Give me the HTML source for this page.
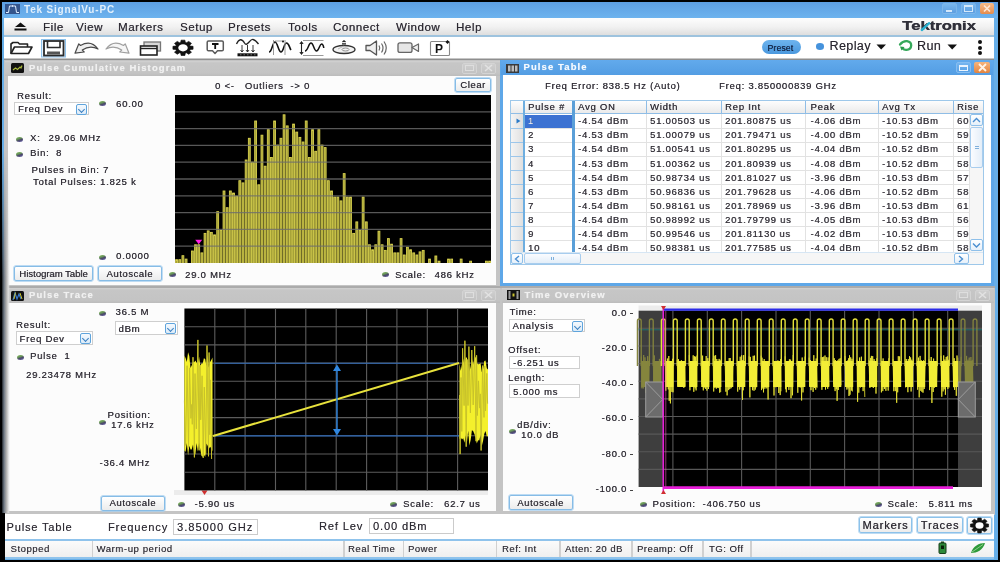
<!DOCTYPE html>
<html><head><meta charset="utf-8">
<style>
*{box-sizing:border-box;margin:0;padding:0}
html,body{width:1000px;height:562px;overflow:hidden;background:#000;font-family:"Liberation Sans",sans-serif;color:#333}
.a{position:absolute}
.t{position:absolute;white-space:nowrap;line-height:1}
.mi{position:absolute;top:22px;font-size:11.5px;letter-spacing:0.55px;color:#2a2730;text-shadow:0.35px 0 0 rgba(42,39,48,0.6);white-space:nowrap;line-height:1}
.l{position:absolute;font-size:9.5px;letter-spacing:0.75px;color:#2c2932;white-space:nowrap;line-height:1;margin-top:0.45px;text-shadow:0.35px 0 0 rgba(44,41,50,0.7)}
.btn{position:absolute;border:1px solid #86bce6;box-shadow:0 0 0 0.7px #a8d0f0;border-radius:2px;background:linear-gradient(#fff,#ececec);font-size:9.5px;letter-spacing:0.55px;color:#2c2932;text-align:center;white-space:nowrap;text-shadow:0.35px 0 0 rgba(44,41,50,0.7)}
.sel{position:absolute;border:1px solid #cfcfcf;background:#fff;font-size:9.5px;letter-spacing:0.75px;color:#2c2932;white-space:nowrap;text-shadow:0.35px 0 0 rgba(44,41,50,0.7)}
.sel i{position:absolute;right:1px;top:1px;width:11px;height:11px;border:1px solid #5fa4dc;border-radius:2px;background:linear-gradient(#f4f9fe,#dcebf8)}
.sel i:after{content:"";position:absolute;left:2px;top:2px;width:4px;height:4px;border-right:1.3px solid #3a7fc0;border-bottom:1.3px solid #3a7fc0;transform:rotate(45deg)}
.ph{position:absolute;height:15px;background:linear-gradient(#d2d2d2 0,#c6c6c6 2px,#c4c4c4 80%,#bcbcbc)}
.pt{position:absolute;font-size:9.5px;font-weight:bold;letter-spacing:1.1px;margin-top:-0.8px;color:#f0f0f0;text-shadow:0 0 1px rgba(255,255,255,0.6);white-space:nowrap;line-height:1}
.bul{position:absolute;width:7px;height:5px;border-radius:50%;background:linear-gradient(160deg,#8ab868 0%,#6a9a58 35%,#4a4868 60%,#7068b8 100%)}
</style></head><body><div id="root" style="position:absolute;left:0;top:0;width:1000px;height:562px;filter:blur(0.4px)">
<!-- window frame -->
<div class="a" style="left:2px;top:2px;width:996px;height:558px;background:#66aee8"></div>
<div class="a" style="left:2px;top:2px;width:996px;height:16px;background:linear-gradient(#5d9fe2,#6db3ee)"></div>
<div class="a" style="left:4px;top:18px;width:990px;height:539px;background:#fff"></div>
<!-- title -->
<svg class="a" style="left:5px;top:4px" width="15" height="10" viewBox="0 0 15 10"><rect width="15" height="10" fill="#34558c"/><path d="M1 8.5 L3.5 8.5 L4.5 2 L10.5 2 L11.5 8.5 L14 8.5" stroke="#dfeeff" stroke-width="1" fill="none"/><path d="M7.5 1 V3" stroke="#dfeeff" stroke-width="0.8"/></svg>
<div class="t" style="left:24px;top:5px;font-size:10px;font-weight:bold;letter-spacing:0.8px;color:#e2f0fc">Tek SignalVu-PC</div>
<div class="a" style="left:942px;top:3px;width:15px;height:11px;border:1px solid #7cb6ea;border-radius:2px;background:linear-gradient(#78b6ee,#5d9fe0)"></div>
<div class="a" style="left:946px;top:9.5px;width:6px;height:2px;background:#d4e8fa"></div>
<div class="a" style="left:961px;top:3px;width:15px;height:11px;border:1px solid #7cb6ea;border-radius:2px;background:linear-gradient(#78b6ee,#5d9fe0)"></div>
<div class="a" style="left:964px;top:5px;width:9px;height:7px;border:1.2px solid #d4e8fa;border-top-width:2px"></div>
<div class="a" style="left:980px;top:3px;width:14px;height:11px;border-radius:2px;background:linear-gradient(#f6bb88,#e68c4c)"></div>
<svg class="a" style="left:982px;top:4px" width="10" height="9"><path d="M2 1.5 L8 7.5 M8 1.5 L2 7.5" stroke="#fde6d4" stroke-width="1.7"/></svg>

<!-- menu -->
<div class="a" style="left:4px;top:18px;width:990px;height:18px;background:linear-gradient(#fdfdfd,#f1f1f1 50%,#dcdcdc)"></div>
<div class="a" style="left:4px;top:35.2px;width:990px;height:1.6px;background:#9ec3de"></div>
<svg class="a" style="left:13px;top:22px" width="15" height="9"><path d="M7.5 0.5 L13 5 L2 5 Z" fill="#111"/><rect x="1.5" y="6.5" width="12" height="2" fill="#111"/></svg>
<div class="mi" style="left:43px">File</div>
<div class="mi" style="left:76px">View</div>
<div class="mi" style="left:118px">Markers</div>
<div class="mi" style="left:180px">Setup</div>
<div class="mi" style="left:228px">Presets</div>
<div class="mi" style="left:288px">Tools</div>
<div class="mi" style="left:333px">Connect</div>
<div class="mi" style="left:396px">Window</div>
<div class="mi" style="left:456px">Help</div>
<!-- tektronix logo -->
<div class="t" style="left:901.5px;top:19px;font-size:13px;font-weight:bold;letter-spacing:0px;color:#30303a;text-shadow:0.4px 0 0 #30303a;transform:scaleX(1.28);transform-origin:0 0">Tektronix</div><svg class="a" style="left:915px;top:20px" width="20" height="14"><path d="M6.8 10 L14.2 3.2" stroke="#2ab0d0" stroke-width="2.4" stroke-linecap="round"/></svg>

<!-- toolbar -->
<div class="a" style="left:4px;top:57.8px;width:990px;height:1.2px;background:#c6c6c6"></div><div class="a" style="left:4px;top:59px;width:990px;height:1.8px;background:#8e8e8e"></div>
<svg class="a" style="left:0;top:0" width="1000" height="60" viewBox="0 0 1000 60">
 <!-- open folder -->
 <path d="M11 53.5 L11 44 L13 42.5 L18 42.5 L19.5 44 L27.5 44 L27.5 47" fill="none" stroke="#222" stroke-width="1.6" stroke-linejoin="round"/>
 <path d="M11 53.5 L14.5 47 L32 47 L28.5 53.5 Z" fill="#fff" stroke="#222" stroke-width="1.6" stroke-linejoin="round"/>
 <!-- save highlight -->
 <rect x="41.5" y="39.5" width="24" height="17.5" fill="#e4f0fb" stroke="#8cc0ea" stroke-width="1"/>
 <rect x="44" y="41" width="19.5" height="14.5" fill="#fff" stroke="#2a2a2a" stroke-width="1.8"/>
 <path d="M47.5 41 V47.5 H60 V41" fill="none" stroke="#2a2a2a" stroke-width="1.6"/>
 <rect x="47" y="51.5" width="13" height="3" fill="#555"/>
 <!-- undo -->
 <path d="M98 49 Q91 39.5 80.5 45.5 L78.8 43.8 L75 53.2 L84.2 52 L82.3 50 Q90 45 98 49 Z" fill="#efefef" stroke="#4a4a4a" stroke-width="1.2" stroke-linejoin="round"/>
 <!-- redo -->
 <path d="M106 49 Q113 39.5 123.5 45.5 L125.2 43.8 L129 53.2 L119.8 52 L121.7 50 Q114 45 106 49 Z" fill="#f6f6f6" stroke="#a0a0a0" stroke-width="1.2" stroke-linejoin="round"/>
 <!-- windows -->
 <rect x="144" y="42" width="16.5" height="9" fill="#d8d8d8" stroke="#777" stroke-width="1.3"/>
 <rect x="140.5" y="46" width="16.5" height="9" fill="#fff" stroke="#222" stroke-width="1.6"/>
 <path d="M140.5 48.5 H157" stroke="#222" stroke-width="1.4"/>
 <!-- gear -->
 <g transform="translate(183,47.8) scale(1.28,0.97)"><path fill="#111" stroke="#111" stroke-width="0.6" stroke-linejoin="round" d="M5.64 -1.74 L7.86 -1.51 L7.86 1.51 L5.64 1.74 L5.22 2.75 L6.62 4.49 L4.49 6.62 L2.75 5.22 L1.74 5.64 L1.51 7.86 L-1.51 7.86 L-1.74 5.64 L-2.75 5.22 L-4.49 6.62 L-6.62 4.49 L-5.22 2.75 L-5.64 1.74 L-7.86 1.51 L-7.86 -1.51 L-5.64 -1.74 L-5.22 -2.75 L-6.62 -4.49 L-4.49 -6.62 L-2.75 -5.22 L-1.74 -5.64 L-1.51 -7.86 L1.51 -7.86 L1.74 -5.64 L2.75 -5.22 L4.49 -6.62 L6.62 -4.49 L5.22 -2.75 Z"/><circle r="3.7" fill="#fff"/></g>
 <!-- T bubble -->
 <path d="M208.5 41 H222 Q223.3 41 223.3 42.3 V49.5 Q223.3 50.8 222 50.8 H217.5 L215 53.5 L212.5 50.8 H208.5 Q207.2 50.8 207.2 49.5 V42.3 Q207.2 41 208.5 41 Z" fill="#fff" stroke="#5a5a5a" stroke-width="1.5" stroke-linejoin="round"/>
 <path d="M212 44 H218.5 M215.2 44 V49" stroke="#111" stroke-width="1.8"/>
 <!-- spectrum w/ arrows -->
 <path d="M236.5 44 C239 38.5 242 38.5 244.5 43 C247 47.5 250 38.5 253 39.5 C255.5 40 257 42 258.5 44" fill="none" stroke="#222" stroke-width="1.3"/>
 <path d="M242 45 V52 M247.5 45 V52 M253 45 V52" stroke="#222" stroke-width="0.9"/>
 <path d="M240.5 50 L242 52 L243.5 50 M246 50 L247.5 52 L249 50 M251.5 50 L253 52 L254.5 50" fill="none" stroke="#222" stroke-width="0.9"/>
 <rect x="237.5" y="53.3" width="20" height="3" fill="#111"/>
 <path d="M240 54.8 H256" stroke="#888" stroke-width="0.8" stroke-dasharray="1.5 2"/>
 <!-- waveform markers -->
 <path d="M269 52 C272 52 272.5 42 275 42 C277.5 42 278.5 52 281 52 C283.5 52 284 43 286.5 43 C289 43 289.5 48 291 50" fill="none" stroke="#111" stroke-width="1.6"/>
 <path d="M273.5 40 V55 M285 40 V55" stroke="#999" stroke-width="1"/>
 <path d="M275 41 H284" stroke="#888" stroke-width="0.8"/>
 <circle cx="283" cy="41.5" r="1" fill="#111"/>
 <!-- waveform with ruler -->
 <path d="M303 40.5 H323.5 M303 55.5 H323.5" stroke="#999" stroke-width="1.2"/>
 <path d="M301.5 42 V54" stroke="#222" stroke-width="1.1"/>
 <path d="M299.8 44 L301.5 41.5 L303.2 44 M299.8 52 L301.5 54.5 L303.2 52" fill="#222" stroke="#222" stroke-width="0.8"/>
 <path d="M305 51 C308 51 308.5 43 311 43 C313.5 43 314 51 316.5 51 C319 51 319.5 44 321.5 44 C322.8 44 323.5 46 323.8 48" fill="none" stroke="#111" stroke-width="1.5"/>
 <!-- disc -->
 <ellipse cx="344" cy="49.5" rx="11" ry="4" fill="#f2f2f2" stroke="#333" stroke-width="1.3"/>
 <ellipse cx="345.5" cy="49.5" rx="3.5" ry="1.5" fill="none" stroke="#777" stroke-width="0.8"/>
 <path d="M338 49 L344 46" stroke="#aaa" stroke-width="0.8"/>
 <path d="M342 43.8 H346 M342.5 42 L344 40.8 L345.5 42" stroke="#222" stroke-width="1.2" fill="#222"/>
 <!-- speaker -->
 <path d="M366 45.5 H370 L376.5 41 V55 L370 50.5 H366 Z" fill="#f0f0f0" stroke="#555" stroke-width="1.3" stroke-linejoin="round"/>
 <path d="M379 45.5 Q380.5 48 379 50.5 M381.5 43.5 Q384.5 48 381.5 52.5 M384 41.5 Q388.5 48 384 54.5" fill="none" stroke="#666" stroke-width="1.2"/>
 <!-- camera -->
 <rect x="398" y="42.8" width="14" height="9.6" rx="2" fill="#e6e6e6" stroke="#666" stroke-width="1.3"/>
 <path d="M412 47.5 L418.5 44 V51.5 Z" fill="#f2f2f2" stroke="#666" stroke-width="1.2" stroke-linejoin="round"/>
 <!-- P box -->
 <rect x="430.5" y="41.5" width="19" height="14" rx="1" fill="#fff" stroke="#888" stroke-width="1.1"/>
 <text x="435" y="53" font-family="Liberation Sans" font-weight="bold" font-size="12" fill="#111">P</text>
 <path d="M447.5 40 L449.5 42 L447.5 44 L445.5 42 Z" fill="#111"/>
</svg>

<!-- ===== PANEL 1: histogram ===== -->
<div class="a" style="left:4px;top:60px;width:497px;height:229px;background:#c4c4c4"></div>
<div class="ph" style="left:5px;top:60.8px;width:495px"></div>
<div class="a" style="left:8px;top:76px;width:488px;height:208.5px;background:#fcfcfc"></div>
<svg class="a" style="left:11px;top:63px" width="13" height="10"><rect width="13" height="10" rx="1.5" fill="#111"/><path d="M2 7 L4.5 5 L6.5 6.5 L9 4 L10 5 L11 2.5" stroke="#a9b83a" stroke-width="1.2" fill="none"/></svg>
<div class="pt" style="left:29px;top:64px">Pulse Cumulative Histogram</div>
<div class="a" style="left:462px;top:62.5px;width:15px;height:11px;border:1px solid #d4d4d4;border-radius:2px;background:linear-gradient(#cfcfcf,#c2c2c2)"></div>
<div class="a" style="left:465px;top:65px;width:9px;height:6px;border:1px solid #dedede"></div>
<div class="a" style="left:481px;top:62.5px;width:15px;height:11px;border:1px solid #d4d4d4;border-radius:2px;background:linear-gradient(#cfcfcf,#c2c2c2)"></div>
<svg class="a" style="left:483px;top:64px" width="11" height="8"><path d="M2 1 L9 7 M9 1 L2 7" stroke="#e2e2e2" stroke-width="1.6"/></svg>

<div class="l" style="left:17px;top:91px">Result:</div>
<div class="sel" style="left:14px;top:102px;width:75px;height:13px"><span style="position:absolute;left:3px;top:0.3px;line-height:11px">Freq Dev</span><i></i></div>
<div class="bul" style="left:99px;top:101px"></div>
<div class="l" style="left:116px;top:99px">60.00</div>
<div class="bul" style="left:16px;top:137px"></div>
<div class="l" style="left:30px;top:133px">X:</div>
<div class="l" style="left:48.5px;top:133px">29.06 MHz</div>
<div class="bul" style="left:16px;top:152px"></div>
<div class="l" style="left:30px;top:147.5px">Bin:</div>
<div class="l" style="left:56px;top:147.5px">8</div>
<div class="l" style="left:31.5px;top:164.5px">Pulses in Bin: 7</div>
<div class="l" style="left:33px;top:177px">Total Pulses: 1.825 k</div>
<div class="bul" style="left:99px;top:255px"></div>
<div class="l" style="left:116px;top:251px">0.0000</div>
<div class="btn" style="left:14px;top:266px;width:79px;height:15px;line-height:13px;letter-spacing:0px">Histogram Table</div>
<div class="btn" style="left:97.5px;top:266px;width:64.5px;height:15px;line-height:13px">Autoscale</div>
<div class="bul" style="left:169px;top:272px"></div>
<div class="l" style="left:185px;top:270px">29.0 MHz</div>
<div class="l" style="left:215px;top:81px">0 &lt;-&nbsp;&nbsp; Outliers&nbsp; -&gt; 0</div>
<div class="btn" style="left:455px;top:78px;width:36px;height:14px;line-height:12px">Clear</div>
<div class="bul" style="left:382px;top:272px"></div>
<div class="l" style="left:395px;top:270px">Scale:</div>
<div class="l" style="left:434.5px;top:270px">486 kHz</div>
<svg class="a" style="left:175px;top:94.5px" width="316.2" height="168.0" viewBox="175 94.5 316.2 168.0">
<rect x="175" y="94.5" width="316.2" height="168.0" fill="#000"/>
<g fill="#a19d36" stroke="#d9d24e" stroke-width="0.9"><rect x="175.65" y="259.2" width="1.86" height="5.3"/><rect x="178.81" y="259.2" width="1.86" height="5.3"/><rect x="181.97" y="255.2" width="1.86" height="9.3"/><rect x="185.14" y="258.6" width="1.86" height="5.9"/><rect x="191.46" y="250.5" width="1.86" height="14.0"/><rect x="194.62" y="244.3" width="1.86" height="20.2"/><rect x="197.78" y="244.3" width="1.86" height="20.2"/><rect x="200.95" y="252.4" width="1.86" height="12.1"/><rect x="204.11" y="232.9" width="1.86" height="31.6"/><rect x="207.27" y="230.4" width="1.86" height="34.1"/><rect x="210.43" y="231.9" width="1.86" height="32.6"/><rect x="213.59" y="234.4" width="1.86" height="30.1"/><rect x="216.76" y="211.2" width="1.86" height="53.3"/><rect x="219.92" y="229.8" width="1.86" height="34.7"/><rect x="223.08" y="190.5" width="1.86" height="74.0"/><rect x="226.24" y="207.2" width="1.86" height="57.3"/><rect x="229.40" y="190.5" width="1.86" height="74.0"/><rect x="232.57" y="192.6" width="1.86" height="71.9"/><rect x="235.73" y="195.7" width="1.86" height="68.8"/><rect x="238.89" y="180.2" width="1.86" height="84.3"/><rect x="242.05" y="182.4" width="1.86" height="82.1"/><rect x="245.21" y="159.5" width="1.86" height="105.0"/><rect x="248.38" y="137.8" width="1.86" height="126.7"/><rect x="251.54" y="161.7" width="1.86" height="102.8"/><rect x="254.70" y="120.5" width="1.86" height="144.0"/><rect x="257.86" y="184.3" width="1.86" height="80.2"/><rect x="261.02" y="134.7" width="1.86" height="129.8"/><rect x="264.19" y="165.7" width="1.86" height="98.8"/><rect x="267.35" y="129.2" width="1.86" height="135.3"/><rect x="270.51" y="157.0" width="1.86" height="107.5"/><rect x="273.67" y="120.5" width="1.86" height="144.0"/><rect x="276.83" y="144.6" width="1.86" height="119.9"/><rect x="280.00" y="137.8" width="1.86" height="126.7"/><rect x="283.16" y="114.3" width="1.86" height="150.2"/><rect x="286.32" y="125.4" width="1.86" height="139.1"/><rect x="289.48" y="157.0" width="1.86" height="107.5"/><rect x="292.64" y="123.6" width="1.86" height="140.9"/><rect x="295.81" y="131.6" width="1.86" height="132.9"/><rect x="298.97" y="136.9" width="1.86" height="127.6"/><rect x="302.13" y="141.5" width="1.86" height="123.0"/><rect x="305.29" y="120.5" width="1.86" height="144.0"/><rect x="308.45" y="157.0" width="1.86" height="107.5"/><rect x="311.62" y="129.2" width="1.86" height="135.3"/><rect x="314.78" y="150.8" width="1.86" height="113.7"/><rect x="317.94" y="129.2" width="1.86" height="135.3"/><rect x="321.10" y="144.6" width="1.86" height="119.9"/><rect x="324.26" y="147.1" width="1.86" height="117.4"/><rect x="327.43" y="180.2" width="1.86" height="84.3"/><rect x="330.59" y="190.5" width="1.86" height="74.0"/><rect x="333.75" y="196.6" width="1.86" height="67.9"/><rect x="336.91" y="196.6" width="1.86" height="67.9"/><rect x="340.07" y="200.4" width="1.86" height="64.1"/><rect x="343.24" y="173.1" width="1.86" height="91.4"/><rect x="346.40" y="196.6" width="1.86" height="67.9"/><rect x="349.56" y="196.6" width="1.86" height="67.9"/><rect x="352.72" y="232.9" width="1.86" height="31.6"/><rect x="355.88" y="221.4" width="1.86" height="43.1"/><rect x="359.05" y="229.8" width="1.86" height="34.7"/><rect x="362.21" y="196.6" width="1.86" height="67.9"/><rect x="365.37" y="221.4" width="1.86" height="43.1"/><rect x="368.53" y="244.3" width="1.86" height="20.2"/><rect x="371.69" y="249.3" width="1.86" height="15.2"/><rect x="374.86" y="244.3" width="1.86" height="20.2"/><rect x="378.02" y="230.7" width="1.86" height="33.8"/><rect x="381.18" y="244.3" width="1.86" height="20.2"/><rect x="384.34" y="249.9" width="1.86" height="14.6"/><rect x="387.50" y="238.1" width="1.86" height="26.4"/><rect x="390.67" y="243.7" width="1.86" height="20.8"/><rect x="393.83" y="252.4" width="1.86" height="12.1"/><rect x="396.99" y="252.4" width="1.86" height="12.1"/><rect x="400.15" y="238.1" width="1.86" height="26.4"/><rect x="403.31" y="254.5" width="1.86" height="10.0"/><rect x="406.48" y="246.8" width="1.86" height="17.7"/><rect x="409.64" y="249.3" width="1.86" height="15.2"/><rect x="412.80" y="252.4" width="1.86" height="12.1"/><rect x="415.96" y="254.5" width="1.86" height="10.0"/><rect x="419.12" y="251.4" width="1.86" height="13.1"/><rect x="422.29" y="249.9" width="1.86" height="14.6"/><rect x="428.61" y="258.6" width="1.86" height="5.9"/><rect x="434.93" y="255.5" width="1.86" height="9.0"/><rect x="438.10" y="260.7" width="1.86" height="3.8"/><rect x="447.58" y="258.6" width="1.86" height="5.9"/><rect x="450.74" y="258.6" width="1.86" height="5.9"/><rect x="460.23" y="258.6" width="1.86" height="5.9"/><rect x="469.72" y="260.7" width="1.86" height="3.8"/><rect x="485.53" y="260.7" width="1.86" height="3.8"/><rect x="488.69" y="260.7" width="1.86" height="3.8"/></g>
<g stroke="#6e6e6e" stroke-width="1.3" opacity="0.8"><path d="M175 111.3 H491.2"/><path d="M175 128.1 H491.2"/><path d="M175 144.9 H491.2"/><path d="M175 161.7 H491.2"/><path d="M175 178.5 H491.2"/><path d="M175 195.3 H491.2"/><path d="M175 212.1 H491.2"/><path d="M175 228.9 H491.2"/><path d="M175 245.7 H491.2"/></g>
<path d="M195.2 239.3 H202.2 L198.7 243.8 Z" fill="#ff20e0"/>
</svg>

<!-- ===== PANEL 2: table ===== -->
<div class="a" style="left:500px;top:59.5px;width:494px;height:226px;background:#5ea7e8"></div>
<div class="a" style="left:501px;top:60px;width:492px;height:15px;background:linear-gradient(#62aaec,#539de3)"></div>
<div class="a" style="left:503px;top:75px;width:488px;height:207.5px;background:#fff"></div>
<svg class="a" style="left:506px;top:63.5px" width="13" height="9"><rect width="13" height="9" fill="#3a3a3a"/><rect x="2" y="1.5" width="2.5" height="6" fill="#bdbdbd"/><rect x="5.5" y="1.5" width="2.5" height="6" fill="#bdbdbd"/><rect x="9" y="1.5" width="2.5" height="6" fill="#bdbdbd"/></svg>
<div class="pt" style="left:523.5px;top:63px;color:#f6faff">Pulse Table</div>
<div class="a" style="left:955.5px;top:62px;width:15.5px;height:11px;border:1px solid #86bdf0;border-radius:2px;background:linear-gradient(#74b5f0,#5aa2e6)"></div>
<div class="a" style="left:959px;top:65px;width:9px;height:6px;border:1.3px solid #eaf4fe;border-top-width:2px"></div>
<div class="a" style="left:974px;top:62px;width:15.5px;height:11px;border-radius:2px;background:linear-gradient(#f6b47c,#e3843f)"></div>
<svg class="a" style="left:976.5px;top:63px" width="11" height="9"><path d="M2 1 L9 8 M9 1 L2 8" stroke="#fff3e6" stroke-width="1.8"/></svg>
<div class="l" style="left:545px;top:81px">Freq Error: 838.5 Hz (Auto)</div>
<div class="l" style="left:719px;top:81px">Freq: 3.850000839 GHz</div>
<div class="a" style="left:510px;top:100px;width:473.5px;height:165px;background:#fff;border:1px solid #9ec8ea"></div>
<div class="a" style="left:511px;top:101px;width:471.5px;height:12.5px;background:linear-gradient(#fdfdfd,#e9e9e9)"></div>
<div class="a" style="left:510.5px;top:113px;width:472px;height:1px;background:#8fbde6"></div>
<div class="a" style="left:511px;top:114px;width:12.5px;height:138px;background:linear-gradient(90deg,#f4f4f4,#dedede)"></div>
<div class="a" style="left:524.5px;top:127.55px;width:444.5px;height:1px;background:#e2e2e2"></div>
<div class="a" style="left:511px;top:127.55px;width:13px;height:1px;background:#9cc6ea"></div>
<div class="a" style="left:524.5px;top:141.60px;width:444.5px;height:1px;background:#e2e2e2"></div>
<div class="a" style="left:511px;top:141.60px;width:13px;height:1px;background:#9cc6ea"></div>
<div class="a" style="left:524.5px;top:155.65px;width:444.5px;height:1px;background:#e2e2e2"></div>
<div class="a" style="left:511px;top:155.65px;width:13px;height:1px;background:#9cc6ea"></div>
<div class="a" style="left:524.5px;top:169.70px;width:444.5px;height:1px;background:#e2e2e2"></div>
<div class="a" style="left:511px;top:169.70px;width:13px;height:1px;background:#9cc6ea"></div>
<div class="a" style="left:524.5px;top:183.75px;width:444.5px;height:1px;background:#e2e2e2"></div>
<div class="a" style="left:511px;top:183.75px;width:13px;height:1px;background:#9cc6ea"></div>
<div class="a" style="left:524.5px;top:197.80px;width:444.5px;height:1px;background:#e2e2e2"></div>
<div class="a" style="left:511px;top:197.80px;width:13px;height:1px;background:#9cc6ea"></div>
<div class="a" style="left:524.5px;top:211.85px;width:444.5px;height:1px;background:#e2e2e2"></div>
<div class="a" style="left:511px;top:211.85px;width:13px;height:1px;background:#9cc6ea"></div>
<div class="a" style="left:524.5px;top:225.90px;width:444.5px;height:1px;background:#e2e2e2"></div>
<div class="a" style="left:511px;top:225.90px;width:13px;height:1px;background:#9cc6ea"></div>
<div class="a" style="left:524.5px;top:239.95px;width:444.5px;height:1px;background:#e2e2e2"></div>
<div class="a" style="left:511px;top:239.95px;width:13px;height:1px;background:#9cc6ea"></div>
<div class="a" style="left:524.5px;top:254.00px;width:444.5px;height:1px;background:#e2e2e2"></div>
<div class="a" style="left:511px;top:254.00px;width:13px;height:1px;background:#9cc6ea"></div>
<div class="a" style="left:574.0px;top:114px;width:1px;height:138px;background:#e2e2e2"></div>
<div class="a" style="left:574.0px;top:101px;width:1.2px;height:12.5px;background:#8fbde6"></div>
<div class="a" style="left:645.5px;top:114px;width:1px;height:138px;background:#e2e2e2"></div>
<div class="a" style="left:645.5px;top:101px;width:1.2px;height:12.5px;background:#8fbde6"></div>
<div class="a" style="left:720.5px;top:114px;width:1px;height:138px;background:#e2e2e2"></div>
<div class="a" style="left:720.5px;top:101px;width:1.2px;height:12.5px;background:#8fbde6"></div>
<div class="a" style="left:805.0px;top:114px;width:1px;height:138px;background:#e2e2e2"></div>
<div class="a" style="left:805.0px;top:101px;width:1.2px;height:12.5px;background:#8fbde6"></div>
<div class="a" style="left:877.5px;top:114px;width:1px;height:138px;background:#e2e2e2"></div>
<div class="a" style="left:877.5px;top:101px;width:1.2px;height:12.5px;background:#8fbde6"></div>
<div class="a" style="left:953.0px;top:114px;width:1px;height:138px;background:#e2e2e2"></div>
<div class="a" style="left:953.0px;top:101px;width:1.2px;height:12.5px;background:#8fbde6"></div>
<div class="a" style="left:523px;top:101px;width:1.5px;height:151px;background:#6eaee0"></div>
<div class="a" style="left:572px;top:101px;width:2.5px;height:151px;background:#5a9fd8"></div>
<div class="a" style="left:524.5px;top:114.5px;width:47.5px;height:13px;background:#3c72d2"></div>
<svg class="a" style="left:515.5px;top:118px" width="5" height="6"><path d="M0.5 0.5 L4.5 3 L0.5 5.5 Z" fill="#2a7ac8"/></svg>
<div class="l" style="left:528px;top:101.5px">Pulse #</div>
<div class="l" style="left:578px;top:101.5px">Avg ON</div>
<div class="l" style="left:650px;top:101.5px">Width</div>
<div class="l" style="left:725px;top:101.5px">Rep Int</div>
<div class="l" style="left:810.5px;top:101.5px">Peak</div>
<div class="l" style="left:882px;top:101.5px">Avg Tx</div>
<div class="l" style="left:957px;top:101.5px">Rise</div>
<div class="l" style="left:528px;top:115.80px;color:#f4f8ff">1</div>
<div class="l" style="left:578px;top:115.80px;color:#333038">-4.54 dBm</div>
<div class="l" style="left:650px;top:115.80px;color:#333038">51.00503 us</div>
<div class="l" style="left:725px;top:115.80px;color:#333038">201.80875 us</div>
<div class="l" style="left:810.5px;top:115.80px;color:#333038">-4.06 dBm</div>
<div class="l" style="left:882px;top:115.80px;color:#333038">-10.53 dBm</div>
<div class="l" style="left:957px;top:115.80px;color:#333038">60</div>
<div class="l" style="left:528px;top:129.90px;color:#333038">2</div>
<div class="l" style="left:578px;top:129.90px;color:#333038">-4.53 dBm</div>
<div class="l" style="left:650px;top:129.90px;color:#333038">51.00079 us</div>
<div class="l" style="left:725px;top:129.90px;color:#333038">201.79471 us</div>
<div class="l" style="left:810.5px;top:129.90px;color:#333038">-4.00 dBm</div>
<div class="l" style="left:882px;top:129.90px;color:#333038">-10.52 dBm</div>
<div class="l" style="left:957px;top:129.90px;color:#333038">59</div>
<div class="l" style="left:528px;top:144.00px;color:#333038">3</div>
<div class="l" style="left:578px;top:144.00px;color:#333038">-4.54 dBm</div>
<div class="l" style="left:650px;top:144.00px;color:#333038">51.00541 us</div>
<div class="l" style="left:725px;top:144.00px;color:#333038">201.80295 us</div>
<div class="l" style="left:810.5px;top:144.00px;color:#333038">-4.04 dBm</div>
<div class="l" style="left:882px;top:144.00px;color:#333038">-10.52 dBm</div>
<div class="l" style="left:957px;top:144.00px;color:#333038">58</div>
<div class="l" style="left:528px;top:158.10px;color:#333038">4</div>
<div class="l" style="left:578px;top:158.10px;color:#333038">-4.53 dBm</div>
<div class="l" style="left:650px;top:158.10px;color:#333038">51.00362 us</div>
<div class="l" style="left:725px;top:158.10px;color:#333038">201.80939 us</div>
<div class="l" style="left:810.5px;top:158.10px;color:#333038">-4.08 dBm</div>
<div class="l" style="left:882px;top:158.10px;color:#333038">-10.52 dBm</div>
<div class="l" style="left:957px;top:158.10px;color:#333038">58</div>
<div class="l" style="left:528px;top:172.20px;color:#333038">5</div>
<div class="l" style="left:578px;top:172.20px;color:#333038">-4.54 dBm</div>
<div class="l" style="left:650px;top:172.20px;color:#333038">50.98734 us</div>
<div class="l" style="left:725px;top:172.20px;color:#333038">201.81027 us</div>
<div class="l" style="left:810.5px;top:172.20px;color:#333038">-3.96 dBm</div>
<div class="l" style="left:882px;top:172.20px;color:#333038">-10.53 dBm</div>
<div class="l" style="left:957px;top:172.20px;color:#333038">57</div>
<div class="l" style="left:528px;top:186.30px;color:#333038">6</div>
<div class="l" style="left:578px;top:186.30px;color:#333038">-4.53 dBm</div>
<div class="l" style="left:650px;top:186.30px;color:#333038">50.96836 us</div>
<div class="l" style="left:725px;top:186.30px;color:#333038">201.79628 us</div>
<div class="l" style="left:810.5px;top:186.30px;color:#333038">-4.06 dBm</div>
<div class="l" style="left:882px;top:186.30px;color:#333038">-10.52 dBm</div>
<div class="l" style="left:957px;top:186.30px;color:#333038">58</div>
<div class="l" style="left:528px;top:200.40px;color:#333038">7</div>
<div class="l" style="left:578px;top:200.40px;color:#333038">-4.54 dBm</div>
<div class="l" style="left:650px;top:200.40px;color:#333038">50.98161 us</div>
<div class="l" style="left:725px;top:200.40px;color:#333038">201.78969 us</div>
<div class="l" style="left:810.5px;top:200.40px;color:#333038">-3.96 dBm</div>
<div class="l" style="left:882px;top:200.40px;color:#333038">-10.53 dBm</div>
<div class="l" style="left:957px;top:200.40px;color:#333038">61</div>
<div class="l" style="left:528px;top:214.50px;color:#333038">8</div>
<div class="l" style="left:578px;top:214.50px;color:#333038">-4.54 dBm</div>
<div class="l" style="left:650px;top:214.50px;color:#333038">50.98992 us</div>
<div class="l" style="left:725px;top:214.50px;color:#333038">201.79799 us</div>
<div class="l" style="left:810.5px;top:214.50px;color:#333038">-4.05 dBm</div>
<div class="l" style="left:882px;top:214.50px;color:#333038">-10.53 dBm</div>
<div class="l" style="left:957px;top:214.50px;color:#333038">56</div>
<div class="l" style="left:528px;top:228.60px;color:#333038">9</div>
<div class="l" style="left:578px;top:228.60px;color:#333038">-4.54 dBm</div>
<div class="l" style="left:650px;top:228.60px;color:#333038">50.99546 us</div>
<div class="l" style="left:725px;top:228.60px;color:#333038">201.81130 us</div>
<div class="l" style="left:810.5px;top:228.60px;color:#333038">-4.02 dBm</div>
<div class="l" style="left:882px;top:228.60px;color:#333038">-10.53 dBm</div>
<div class="l" style="left:957px;top:228.60px;color:#333038">59</div>
<div class="l" style="left:528px;top:242.70px;color:#333038">10</div>
<div class="l" style="left:578px;top:242.70px;color:#333038">-4.54 dBm</div>
<div class="l" style="left:650px;top:242.70px;color:#333038">50.98381 us</div>
<div class="l" style="left:725px;top:242.70px;color:#333038">201.77585 us</div>
<div class="l" style="left:810.5px;top:242.70px;color:#333038">-4.04 dBm</div>
<div class="l" style="left:882px;top:242.70px;color:#333038">-10.52 dBm</div>
<div class="l" style="left:957px;top:242.70px;color:#333038">58</div>
<div class="a" style="left:969px;top:114px;width:14px;height:138px;background:#fff"></div>
<div class="a" style="left:969px;top:114px;width:14px;height:138px;background:#f6f6f6;border-left:1px solid #e2e2e2"></div>
<div class="a" style="left:970px;top:114px;width:13px;height:12px;border:1px solid #8fc0ea;border-radius:2px;background:linear-gradient(#fff,#e6f0fa)"></div>
<svg class="a" style="left:972px;top:117px" width="9" height="6"><path d="M1 5 L4.5 1.5 L8 5" stroke="#4a8ed0" stroke-width="1.4" fill="none"/></svg>
<div class="a" style="left:970px;top:127px;width:13px;height:41px;border:1px solid #a8cdee;border-radius:2px;background:linear-gradient(90deg,#fafcff,#e4eef8)"></div>
<div class="a" style="left:974.5px;top:146px;width:4px;height:1px;background:#7fb0dc"></div><div class="a" style="left:974.5px;top:148px;width:4px;height:1px;background:#7fb0dc"></div>
<div class="a" style="left:970px;top:239px;width:13px;height:12px;border:1px solid #8fc0ea;border-radius:2px;background:linear-gradient(#fff,#e6f0fa)"></div>
<svg class="a" style="left:972px;top:242px" width="9" height="6"><path d="M1 1.5 L4.5 5 L8 1.5" stroke="#4a8ed0" stroke-width="1.4" fill="none"/></svg>
<div class="a" style="left:511px;top:252px;width:471.5px;height:12px;background:#f6f6f6;border-top:1px solid #d6e6f4"></div>
<div class="a" style="left:511px;top:253px;width:12px;height:11px;border:1px solid #8fc0ea;border-radius:2px;background:linear-gradient(#fff,#e6f0fa)"></div>
<svg class="a" style="left:514px;top:255px" width="6" height="8"><path d="M5 1 L1.5 4 L5 7" stroke="#4a8ed0" stroke-width="1.4" fill="none"/></svg>
<div class="a" style="left:524px;top:253px;width:57px;height:11px;border:1px solid #a8cdee;border-radius:2px;background:linear-gradient(#fafcff,#e4eef8)"></div>
<div class="a" style="left:551px;top:257px;width:1px;height:3px;background:#7fb0dc"></div><div class="a" style="left:553px;top:257px;width:1px;height:3px;background:#7fb0dc"></div>
<div class="a" style="left:953.5px;top:253px;width:15px;height:11px;border:1px solid #8fc0ea;border-radius:2px;background:linear-gradient(#fff,#e6f0fa)"></div>
<svg class="a" style="left:958px;top:255px" width="6" height="8"><path d="M1 1 L4.5 4 L1 7" stroke="#4a8ed0" stroke-width="1.4" fill="none"/></svg>
<!-- ===== PANEL 3: pulse trace ===== -->
<div class="a" style="left:4px;top:287px;width:497px;height:227.5px;background:#c4c4c4"></div>
<div class="a" style="left:4px;top:285.5px;width:497px;height:2.5px;background:#ababab"></div>
<div class="ph" style="left:5px;top:288px;width:495px"></div>
<svg class="a" style="left:11px;top:291px" width="13" height="10"><rect width="13" height="10" rx="1.5" fill="#111"/><path d="M2 9 L4 2 L6 8 L8 3 L10 8" stroke="#3a7ad0" stroke-width="1.2" fill="none"/><path d="M3 8 L4.5 1.5 M9 2 L11 8" stroke="#c8c030" stroke-width="1"/></svg>
<div class="pt" style="left:29px;top:290.5px">Pulse Trace</div>
<div class="a" style="left:462px;top:289.5px;width:15px;height:11px;border:1px solid #d4d4d4;border-radius:2px;background:linear-gradient(#cfcfcf,#c2c2c2)"></div>
<div class="a" style="left:465px;top:292px;width:9px;height:6px;border:1px solid #dedede"></div>
<div class="a" style="left:481px;top:289.5px;width:15px;height:11px;border:1px solid #d4d4d4;border-radius:2px;background:linear-gradient(#cfcfcf,#c2c2c2)"></div>
<svg class="a" style="left:483px;top:291px" width="11" height="8"><path d="M2 1 L9 7 M9 1 L2 7" stroke="#e2e2e2" stroke-width="1.6"/></svg>
<div class="a" style="left:8px;top:303px;width:488px;height:208px;background:#fcfcfc"></div>
<div class="bul" style="left:99px;top:311px"></div>
<div class="l" style="left:115.5px;top:307px">36.5 M</div>
<div class="sel" style="left:114.5px;top:321px;width:63px;height:13.5px"><span style="position:absolute;left:3px;top:0.5px;line-height:11px">dBm</span><i></i></div>
<div class="l" style="left:16px;top:320px">Result:</div>
<div class="sel" style="left:15.5px;top:331px;width:77px;height:13.5px"><span style="position:absolute;left:3px;top:0.5px;line-height:11px">Freq Dev</span><i></i></div>
<div class="bul" style="left:17px;top:355px"></div>
<div class="l" style="left:30px;top:351px">Pulse&nbsp; 1</div>
<div class="l" style="left:26px;top:369.5px">29.23478 MHz</div>
<div class="bul" style="left:99px;top:420px"></div>
<div class="l" style="left:107.5px;top:409.5px">Position:</div>
<div class="l" style="left:111px;top:420px">17.6 kHz</div>
<div class="l" style="left:99.5px;top:458px">-36.4 MHz</div>
<div class="btn" style="left:100.5px;top:496px;width:64.5px;height:14.5px;line-height:12.5px">Autoscale</div>
<div class="bul" style="left:177.5px;top:502px"></div>
<div class="l" style="left:194.5px;top:498.5px">-5.90 us</div>
<div class="bul" style="left:390px;top:502px"></div>
<div class="l" style="left:403px;top:498.5px">Scale:</div>
<div class="l" style="left:444px;top:498.5px">62.7 us</div>
<div class="a" style="left:174px;top:490.4px;width:314px;height:5px;background:#ececec"></div>
<svg class="a" style="left:201px;top:490px" width="7" height="6"><path d="M0.5 0.5 H6.5 L3.5 5 Z" fill="#d03030"/></svg>
<svg class="a" style="left:0;top:0" width="1000" height="562" viewBox="0 0 1000 562"><rect x="184.4" y="308.5" width="303.6" height="181.9" fill="#000"/><path d="M214.8 308.5V490.4M184.4 326.7H488M245.1 308.5V490.4M184.4 344.9H488M275.5 308.5V490.4M184.4 363.1H488M305.8 308.5V490.4M184.4 381.3H488M336.2 308.5V490.4M184.4 399.4H488M366.6 308.5V490.4M184.4 417.6H488M396.9 308.5V490.4M184.4 435.8H488M427.3 308.5V490.4M184.4 454.0H488M457.6 308.5V490.4M184.4 472.2H488" stroke="#5c5c5c" stroke-width="1.1"/><polygon points="184.4,355.8 185.6,357.9 186.8,362.0 188.1,352.2 189.3,356.1 190.5,367.9 191.7,365.4 193.0,362.2 194.2,362.2 195.4,360.4 196.6,362.7 197.8,364.1 199.1,356.8 200.3,365.8 201.5,363.5 202.7,363.4 203.9,358.3 205.2,359.1 206.4,366.1 207.6,354.2 208.8,367.4 210.1,362.0 211.3,360.1 212.5,357.6 212.5,451.4 211.3,448.2 210.1,446.8 208.8,449.0 207.6,445.5 206.4,443.6 205.2,457.0 203.9,454.8 202.7,456.7 201.5,456.1 200.3,449.6 199.1,442.5 197.8,451.5 196.6,443.0 195.4,453.9 194.2,455.9 193.0,444.4 191.7,449.6 190.5,449.5 189.3,445.7 188.1,455.4 186.8,443.0 185.6,451.7 184.4,450.7" fill="#f4f02c"/><polyline points="184.4,400.5 185.6,445.3 187.1,365.7 188.5,447.5 189.6,367.9 190.9,418.4 191.6,404.5 192.3,424.3 193.0,357.2 194.4,457.4 195.0,373.6 196.4,428.8 197.9,339.9 199.1,450.4 200.0,365.3 200.7,419.8 202.1,375.8 203.2,457.9 204.3,387.1 205.7,454.3 207.0,345.5 208.5,456.3 209.1,352.5 209.7,434.7 210.3,379.9 211.6,459.0" fill="none" stroke="#c8c22a" stroke-width="1"/><polygon points="459.5,363.2 460.7,370.8 462.0,364.1 463.2,359.0 464.5,366.1 465.7,357.5 466.9,357.5 468.2,367.1 469.4,371.7 470.7,366.5 471.9,358.5 473.1,364.5 474.4,359.0 475.6,356.5 476.8,363.0 478.1,364.3 479.3,364.0 480.6,363.3 481.8,372.0 483.0,369.4 484.3,361.0 485.5,360.6 486.8,368.3 488.0,369.5 488.0,436.2 486.8,436.4 485.5,431.1 484.3,433.7 483.0,441.3 481.8,445.9 480.6,434.5 479.3,440.6 478.1,440.2 476.8,443.5 475.6,437.4 474.4,433.9 473.1,431.0 471.9,430.2 470.7,439.8 469.4,445.4 468.2,430.7 466.9,443.0 465.7,434.9 464.5,442.7 463.2,438.2 462.0,439.4 460.7,437.5 459.5,439.0" fill="#f4f02c"/><polyline points="459.5,395.0 460.1,454.1 461.1,377.5 461.8,431.4 462.6,348.3 464.1,405.6 464.9,340.7 466.2,446.7 467.2,359.5 468.0,405.5 468.9,346.6 470.4,412.9 471.8,350.0 473.2,404.9 474.7,346.2 476.0,441.2 476.6,355.3 477.4,415.5 478.5,380.9 479.6,408.1 480.3,393.9 481.1,450.5 482.6,365.6 484.0,417.4 484.7,366.0 485.5,411.0 486.8,373.4 487.6,403.7" fill="none" stroke="#c8c22a" stroke-width="1"/><path d="M214.5 363.2 H459 M214.5 435.9 H459" stroke="#2d68b8" stroke-width="1.1"/><path d="M213 436 L459 363" stroke="#e8e23c" stroke-width="2"/><path d="M337 369 V431" stroke="#2f86e0" stroke-width="1.4"/><path d="M333 371 L337 364.5 L341 371 Z M333 429 L337 435.5 L341 429 Z" fill="#2f86e0"/></svg>
<!-- ===== PANEL 4: time overview ===== -->
<div class="a" style="left:500.5px;top:287px;width:494.5px;height:227.5px;background:#c4c4c4"></div>
<div class="a" style="left:500.5px;top:285.5px;width:494.5px;height:2.5px;background:#ababab"></div>
<div class="ph" style="left:501.5px;top:288px;width:492.5px"></div>
<svg class="a" style="left:506.5px;top:290px" width="13" height="10"><rect width="13" height="10" fill="#111"/><rect x="1.5" y="1" width="2" height="8" fill="#9a9a9a"/><rect x="9.5" y="1" width="2" height="8" fill="#9a9a9a"/><rect x="5.5" y="3.5" width="2" height="3" fill="#c8c030"/></svg>
<div class="pt" style="left:524.5px;top:290.5px">Time Overview</div>
<div class="a" style="left:956.0px;top:289.5px;width:15px;height:11px;border:1px solid #d4d4d4;border-radius:2px;background:linear-gradient(#cfcfcf,#c2c2c2)"></div>
<div class="a" style="left:959.0px;top:292px;width:9px;height:6px;border:1px solid #dedede"></div>
<div class="a" style="left:975.0px;top:289.5px;width:15px;height:11px;border:1px solid #d4d4d4;border-radius:2px;background:linear-gradient(#cfcfcf,#c2c2c2)"></div>
<svg class="a" style="left:977.0px;top:291px" width="11" height="8"><path d="M2 1 L9 7 M9 1 L2 7" stroke="#e2e2e2" stroke-width="1.6"/></svg>
<div class="a" style="left:503px;top:303px;width:488px;height:208px;background:#fcfcfc"></div>
<div class="l" style="left:509.5px;top:306.5px">Time:</div>
<div class="sel" style="left:508.5px;top:318.5px;width:76px;height:13.5px"><span style="position:absolute;left:3px;top:0.5px;line-height:11px">Analysis</span><i></i></div>
<div class="l" style="left:508px;top:344.5px">Offset:</div>
<div class="sel" style="left:508.5px;top:355.5px;width:71px;height:13.5px"><span style="position:absolute;left:3.5px;top:0.5px;line-height:11px">-6.251 us</span></div>
<div class="l" style="left:508px;top:372.5px">Length:</div>
<div class="sel" style="left:508.5px;top:384px;width:71px;height:13.5px"><span style="position:absolute;left:3.5px;top:0.5px;line-height:11px">5.000 ms</span></div>
<div class="bul" style="left:508.5px;top:429px"></div>
<div class="l" style="left:517px;top:420px">dB/div:</div>
<div class="l" style="left:521px;top:430px">10.0 dB</div>
<div class="btn" style="left:508.5px;top:494.5px;width:64px;height:15px;line-height:13px">Autoscale</div>
<div class="bul" style="left:640px;top:502px"></div>
<div class="l" style="left:652.5px;top:498.5px">Position:&nbsp;&nbsp;-406.750 us</div>
<div class="bul" style="left:874.5px;top:502px"></div>
<div class="l" style="left:887.5px;top:498.5px">Scale:</div>
<div class="l" style="left:928.5px;top:498.5px">5.811 ms</div>
<div class="l" style="left:560px;width:67px;text-align:right;top:307.1px">0.0</div>
<div class="a" style="left:630px;top:313.4px;width:3px;height:1px;background:#444"></div>
<div class="l" style="left:560px;width:67px;text-align:right;top:342.3px">-20.0</div>
<div class="a" style="left:630px;top:348.6px;width:3px;height:1px;background:#444"></div>
<div class="l" style="left:560px;width:67px;text-align:right;top:377.6px">-40.0</div>
<div class="a" style="left:630px;top:383.9px;width:3px;height:1px;background:#444"></div>
<div class="l" style="left:560px;width:67px;text-align:right;top:412.8px">-60.0</div>
<div class="a" style="left:630px;top:419.1px;width:3px;height:1px;background:#444"></div>
<div class="l" style="left:560px;width:67px;text-align:right;top:448.1px">-80.0</div>
<div class="a" style="left:630px;top:454.4px;width:3px;height:1px;background:#444"></div>
<div class="l" style="left:560px;width:67px;text-align:right;top:483.3px">-100.0</div>
<div class="a" style="left:630px;top:489.6px;width:3px;height:1px;background:#444"></div>
<svg class="a" style="left:0;top:0" width="1000" height="562" viewBox="0 0 1000 562"><rect x="638.6" y="305.5" width="343.4" height="5.5" fill="#ececec"/><rect x="638.6" y="310.7" width="343.4" height="176.3" fill="#3e3e3e"/><rect x="663.3" y="310.7" width="294.7" height="176.3" fill="#000"/><path d="M672.9 310.7V487M638.6 328.3H982M707.3 310.7V487M638.6 346.0H982M741.6 310.7V487M638.6 363.6H982M776.0 310.7V487M638.6 381.2H982M810.3 310.7V487M638.6 398.9H982M844.6 310.7V487M638.6 416.5H982M879.0 310.7V487M638.6 434.1H982M913.3 310.7V487M638.6 451.7H982M947.7 310.7V487M638.6 469.4H982" stroke="#585858" stroke-width="1.1"/><path d="M638.6 329.8 H982" stroke="#1f7070" stroke-width="1"/><rect x="641.2" y="361" width="8.2" height="26" fill="#85853e"/><polyline points="641.2,356.6 641.9,388.3 642.4,362.9 643.2,388.5 643.7,355.0 644.2,384.6 645.0,357.3 645.5,393.0 646.3,363.8 647.0,387.0 647.6,356.2 648.5,385.4 649.3,356.2" fill="none" stroke="#85853e" stroke-width="0.8"/><rect x="653.2" y="361" width="8.2" height="26" fill="#85853e"/><polyline points="653.2,359.5 653.9,388.4 654.3,355.4 655.1,391.0 655.6,364.7 656.4,390.9 657.1,362.3 657.5,391.4 658.0,364.2 658.8,387.3 659.4,358.9 660.3,384.2 660.7,362.2" fill="none" stroke="#85853e" stroke-width="0.8"/><rect x="958.0" y="361" width="3.1" height="26" fill="#85853e"/><polyline points="958.0,357.7 958.8,391.0 959.6,362.8 960.2,392.5 961.1,356.9" fill="none" stroke="#85853e" stroke-width="0.8"/><rect x="964.9" y="361" width="8.2" height="26" fill="#85853e"/><polyline points="964.9,362.9 965.7,388.0 966.6,355.9 967.1,392.2 968.0,359.7 968.8,394.6 969.2,357.6 970.0,388.9 970.9,357.0 971.6,392.7 972.2,359.9 973.0,385.3" fill="none" stroke="#85853e" stroke-width="0.8"/><path d="M637.4 366 V321 Q637.4 319 639.3 319 Q641.2 319 641.2 321 V366M649.4 366 V321 Q649.4 319 651.3 319 Q653.2 319 653.2 321 V366" fill="none" stroke="#85853e" stroke-width="1.3"/><path d="M961.1 366 V321 Q961.1 319 963.0 319 Q964.9 319 964.9 321 V366M973.1 366 V321 Q973.1 319 975.0 319 Q976.9 319 976.9 321 V366" fill="none" stroke="#85853e" stroke-width="1.3"/><rect x="665.2" y="361" width="8.2" height="26" fill="#f2ee36"/><polyline points="665.2,360.0 665.8,390.7 666.3,361.1 666.9,385.6 667.4,358.5 668.3,389.4 668.8,356.0 669.2,400.9 669.7,361.8 670.4,403.4 671.0,364.9 671.9,391.9 672.5,358.8 673.0,392.3 673.4,363.1" fill="none" stroke="#f2ee36" stroke-width="0.8"/><rect x="677.2" y="361" width="8.2" height="26" fill="#f2ee36"/><polyline points="677.2,359.8 678.0,386.3 678.5,359.2 679.0,387.0 679.8,364.8 680.6,386.3 681.4,360.3 682.2,385.9 683.0,363.0 683.8,387.8 684.5,363.5 685.0,386.5" fill="none" stroke="#f2ee36" stroke-width="0.8"/><rect x="689.2" y="361" width="8.2" height="26" fill="#f2ee36"/><polyline points="689.2,355.1 689.9,390.3 690.6,361.4 691.4,386.3 692.0,364.6 692.8,384.9 693.2,355.3 693.8,391.8 694.5,356.3 695.2,388.4 695.6,356.7 696.1,390.4 696.8,355.5" fill="none" stroke="#f2ee36" stroke-width="0.8"/><rect x="701.2" y="361" width="8.2" height="26" fill="#f2ee36"/><polyline points="701.2,363.7 701.9,384.1 702.6,355.6 703.3,390.4 703.8,362.0 704.3,387.5 704.9,364.0 705.4,388.9 706.2,356.0 706.9,390.6 707.8,358.1 708.5,389.0 708.9,363.1" fill="none" stroke="#f2ee36" stroke-width="0.8"/><rect x="713.2" y="361" width="8.2" height="26" fill="#f2ee36"/><polyline points="713.2,358.6 713.7,391.5 714.1,355.7 714.9,388.0 715.6,355.2 716.3,388.7 716.8,359.0 717.3,387.9 717.8,362.0 718.6,388.1 719.1,358.9 719.7,392.7 720.1,359.8 720.7,392.0" fill="none" stroke="#f2ee36" stroke-width="0.8"/><rect x="725.1" y="361" width="8.2" height="26" fill="#f2ee36"/><polyline points="725.1,361.3 725.9,391.7 726.7,361.8 727.1,395.4 727.8,363.2 728.7,390.1 729.2,358.1 729.8,389.0 730.2,358.0 731.1,388.2 731.5,364.6 732.2,387.0 732.9,361.8" fill="none" stroke="#f2ee36" stroke-width="0.8"/><rect x="737.1" y="361" width="8.2" height="26" fill="#f2ee36"/><polyline points="737.1,364.5 737.7,391.6 738.1,361.8 738.6,386.5 739.1,364.4 739.7,389.6 740.2,356.7 740.8,385.7 741.7,355.3 742.5,399.9 742.8,360.0 743.2,390.3 743.7,355.1 744.3,386.8 744.9,363.9" fill="none" stroke="#f2ee36" stroke-width="0.8"/><rect x="749.1" y="361" width="8.2" height="26" fill="#f2ee36"/><polyline points="749.1,356.3 749.9,397.4 750.3,356.9 750.9,386.0 751.7,363.4 752.5,390.2 753.2,355.8 754.0,390.8 754.5,355.6 755.3,389.6 755.9,363.0 756.4,387.2 756.9,361.3" fill="none" stroke="#f2ee36" stroke-width="0.8"/><rect x="761.1" y="361" width="8.2" height="26" fill="#f2ee36"/><polyline points="761.1,355.7 761.5,390.1 762.0,357.7 762.3,388.5 763.1,361.5 763.5,392.4 764.2,359.1 764.9,388.7 765.3,363.3 765.7,387.2 766.4,361.3 766.8,388.4 767.3,363.5 768.1,399.5 768.5,362.8" fill="none" stroke="#f2ee36" stroke-width="0.8"/><rect x="773.1" y="361" width="8.2" height="26" fill="#f2ee36"/><polyline points="773.1,360.3 774.0,395.5 774.8,364.4 775.6,387.2 776.3,361.1 777.1,385.5 777.9,360.4 778.8,393.0 779.4,362.8 780.2,395.1 780.6,359.1 781.0,391.3" fill="none" stroke="#f2ee36" stroke-width="0.8"/><rect x="785.1" y="361" width="8.2" height="26" fill="#f2ee36"/><polyline points="785.1,356.3 785.5,389.2 785.8,361.7 786.3,392.3 786.9,364.0 787.6,386.2 788.1,361.4 788.9,389.9 789.4,359.3 790.0,386.4 790.6,359.6 791.0,398.2 791.8,362.4 792.5,395.3 793.1,355.0" fill="none" stroke="#f2ee36" stroke-width="0.8"/><rect x="797.1" y="361" width="8.2" height="26" fill="#f2ee36"/><polyline points="797.1,360.8 797.8,392.8 798.2,362.3 799.0,384.5 799.6,363.3 800.2,387.5 800.9,361.0 801.6,400.5 802.2,357.5 803.0,392.4 803.4,363.5 804.3,386.8 805.0,356.5" fill="none" stroke="#f2ee36" stroke-width="0.8"/><rect x="809.1" y="361" width="8.2" height="26" fill="#f2ee36"/><polyline points="809.1,357.6 809.8,386.0 810.3,360.0 811.0,390.2 811.5,361.5 812.1,385.3 812.5,362.0 813.1,391.9 813.8,355.2 814.5,388.0 815.1,364.6 815.7,389.7 816.2,358.5 817.0,388.1" fill="none" stroke="#f2ee36" stroke-width="0.8"/><rect x="821.1" y="361" width="8.2" height="26" fill="#f2ee36"/><polyline points="821.1,357.2 821.9,389.8 822.5,357.2 823.1,384.8 823.7,356.7 824.5,387.0 825.0,355.5 825.5,389.6 826.3,357.2 826.7,385.0 827.3,362.6 827.7,388.8 828.1,357.4 828.8,385.8" fill="none" stroke="#f2ee36" stroke-width="0.8"/><rect x="833.1" y="361" width="8.2" height="26" fill="#f2ee36"/><polyline points="833.1,363.2 833.7,384.1 834.2,358.2 835.1,391.1 835.4,360.0 836.3,389.2 836.7,364.3 837.1,400.9 837.9,360.3 838.3,390.0 839.0,358.9 839.8,386.6 840.2,358.2 841.0,385.3" fill="none" stroke="#f2ee36" stroke-width="0.8"/><rect x="845.0" y="361" width="8.2" height="26" fill="#f2ee36"/><polyline points="845.0,356.1 845.8,386.1 846.3,363.7 846.9,389.6 847.5,360.6 848.1,388.4 848.6,358.3 849.0,396.0 849.5,355.3 850.0,394.7 850.7,357.3 851.4,390.6 852.0,358.8 852.5,391.5" fill="none" stroke="#f2ee36" stroke-width="0.8"/><rect x="857.0" y="361" width="8.2" height="26" fill="#f2ee36"/><polyline points="857.0,359.8 857.6,401.8 858.0,361.8 858.8,392.7 859.6,357.5 860.5,387.4 861.4,356.7 862.0,386.5 862.5,362.9 863.1,391.1 864.0,363.9 864.8,397.0" fill="none" stroke="#f2ee36" stroke-width="0.8"/><rect x="869.0" y="361" width="8.2" height="26" fill="#f2ee36"/><polyline points="869.0,360.1 869.9,387.9 870.6,357.9 871.0,385.2 871.4,355.9 872.0,384.4 872.7,356.1 873.3,388.0 874.1,359.1 874.6,385.0 875.2,362.0 876.0,393.6 876.7,358.1" fill="none" stroke="#f2ee36" stroke-width="0.8"/><rect x="881.0" y="361" width="8.2" height="26" fill="#f2ee36"/><polyline points="881.0,363.5 881.4,392.4 882.0,361.3 882.8,391.1 883.1,358.4 883.6,385.9 883.9,363.0 884.4,389.0 885.2,363.5 885.9,390.8 886.3,364.3 886.8,385.9 887.4,362.9 888.2,390.6 888.7,358.2" fill="none" stroke="#f2ee36" stroke-width="0.8"/><rect x="893.0" y="361" width="8.2" height="26" fill="#f2ee36"/><polyline points="893.0,359.3 893.8,391.2 894.7,364.2 895.3,391.1 895.8,361.2 896.7,402.8 897.1,362.1 897.7,392.3 898.3,356.2 899.1,384.3 899.6,356.4 900.3,384.6" fill="none" stroke="#f2ee36" stroke-width="0.8"/><rect x="905.0" y="361" width="8.2" height="26" fill="#f2ee36"/><polyline points="905.0,364.7 905.6,387.3 906.3,359.0 906.9,385.7 907.4,362.6 907.9,392.2 908.3,359.1 908.8,387.2 909.5,356.2 910.1,384.7 910.6,357.4 911.1,391.5 911.8,359.7 912.6,386.8" fill="none" stroke="#f2ee36" stroke-width="0.8"/><rect x="917.0" y="361" width="8.2" height="26" fill="#f2ee36"/><polyline points="917.0,362.5 917.6,389.7 918.5,357.6 919.2,397.4 920.1,355.9 920.8,390.8 921.4,360.4 921.9,391.8 922.6,361.3 923.0,392.7 923.5,360.4 924.2,389.0 925.1,362.8" fill="none" stroke="#f2ee36" stroke-width="0.8"/><rect x="929.0" y="361" width="8.2" height="26" fill="#f2ee36"/><polyline points="929.0,359.3 929.6,390.1 930.1,361.9 930.6,386.6 931.2,357.0 931.9,403.0 932.6,363.6 933.2,392.0 933.6,358.6 934.2,387.9 934.6,361.8 935.4,385.7 936.0,363.0 936.4,385.6 937.1,362.2" fill="none" stroke="#f2ee36" stroke-width="0.8"/><rect x="941.0" y="361" width="8.2" height="26" fill="#f2ee36"/><polyline points="941.0,355.8 941.8,396.7 942.7,361.0 943.1,391.4 943.7,355.4 944.2,389.3 944.9,359.5 945.4,394.8 946.2,357.0 946.8,385.0 947.3,356.2 947.9,388.9 948.7,359.8 949.1,387.6" fill="none" stroke="#f2ee36" stroke-width="0.8"/><rect x="953.0" y="361" width="5.0" height="26" fill="#f2ee36"/><polyline points="953.0,364.8 953.6,387.2 954.2,358.2 954.6,389.9 955.4,362.6 956.3,395.8 957.0,355.5 957.8,386.4" fill="none" stroke="#f2ee36" stroke-width="0.8"/><path d="M661.4 366 V321 Q661.4 319 663.3 319 Q665.2 319 665.2 321 V366M673.4 366 V321 Q673.4 319 675.3 319 Q677.2 319 677.2 321 V366M685.4 366 V321 Q685.4 319 687.3 319 Q689.2 319 689.2 321 V366M697.4 366 V321 Q697.4 319 699.3 319 Q701.2 319 701.2 321 V366M709.4 366 V321 Q709.4 319 711.3 319 Q713.2 319 713.2 321 V366M721.4 366 V321 Q721.4 319 723.2 319 Q725.1 319 725.1 321 V366M733.3 366 V321 Q733.3 319 735.2 319 Q737.1 319 737.1 321 V366M745.3 366 V321 Q745.3 319 747.2 319 Q749.1 319 749.1 321 V366M757.3 366 V321 Q757.3 319 759.2 319 Q761.1 319 761.1 321 V366M769.3 366 V321 Q769.3 319 771.2 319 Q773.1 319 773.1 321 V366M781.3 366 V321 Q781.3 319 783.2 319 Q785.1 319 785.1 321 V366M793.3 366 V321 Q793.3 319 795.2 319 Q797.1 319 797.1 321 V366M805.3 366 V321 Q805.3 319 807.2 319 Q809.1 319 809.1 321 V366M817.3 366 V321 Q817.3 319 819.2 319 Q821.1 319 821.1 321 V366M829.3 366 V321 Q829.3 319 831.2 319 Q833.1 319 833.1 321 V366M841.2 366 V321 Q841.2 319 843.1 319 Q845.0 319 845.0 321 V366M853.2 366 V321 Q853.2 319 855.1 319 Q857.0 319 857.0 321 V366M865.2 366 V321 Q865.2 319 867.1 319 Q869.0 319 869.0 321 V366M877.2 366 V321 Q877.2 319 879.1 319 Q881.0 319 881.0 321 V366M889.2 366 V321 Q889.2 319 891.1 319 Q893.0 319 893.0 321 V366M901.2 366 V321 Q901.2 319 903.1 319 Q905.0 319 905.0 321 V366M913.2 366 V321 Q913.2 319 915.1 319 Q917.0 319 917.0 321 V366M925.2 366 V321 Q925.2 319 927.1 319 Q929.0 319 929.0 321 V366M937.2 366 V321 Q937.2 319 939.1 319 Q941.0 319 941.0 321 V366M949.2 366 V321 Q949.2 319 951.1 319 Q953.0 319 953.0 321 V366" fill="none" stroke="#e4e03a" stroke-width="1.4"/><rect x="645.7" y="382" width="17" height="35" fill="#6c6c6c" stroke="#9c9c9c" stroke-width="1"/><rect x="958.3" y="382" width="17" height="35" fill="#6c6c6c" stroke="#9c9c9c" stroke-width="1"/><path d="M645.7 382 L662.7 399.5 L645.7 417" fill="none" stroke="#9c9c9c" stroke-width="1"/><path d="M975.3 382 L958.3 399.5 L975.3 417" fill="none" stroke="#9c9c9c" stroke-width="1"/><path d="M663.3 309.6 H958" stroke="#2a2ae8" stroke-width="2.2"/><path d="M663.3 487.6 H953" stroke="#e81ed8" stroke-width="2.6"/><path d="M663.3 306 V493" stroke="#e81ed8" stroke-width="1.6"/><path d="M665.8 311 V487" stroke="#e05ab0" stroke-width="0.9" opacity="0.7"/><path d="M661 306 H666 L663.5 310 Z M661 494 H666 L663.5 490 Z" fill="#d03030"/></svg>
<!-- ===== BOTTOM BAR ===== -->
<div class="a" style="left:4px;top:514.3px;width:990px;height:24.5px;background:#fff"></div>
<div class="t" style="left:6.5px;top:522px;font-size:11px;letter-spacing:0.85px;color:#2a2730;text-shadow:0.3px 0 0 rgba(42,39,48,0.5)">Pulse Table</div>
<div class="t" style="left:108px;top:522px;font-size:11px;letter-spacing:0.9px;color:#2a2730;text-shadow:0.3px 0 0 rgba(42,39,48,0.5)">Frequency</div>
<div class="a" style="left:173px;top:519.2px;width:85px;height:15.5px;border:1px solid #cbcbcb;background:#fff"></div>
<div class="t" style="left:177px;top:522px;font-size:11px;letter-spacing:1.05px;color:#2a2730;text-shadow:0.3px 0 0 rgba(42,39,48,0.5)">3.85000 GHz</div>
<div class="t" style="left:319px;top:521px;font-size:11px;letter-spacing:0.9px;color:#2a2730;text-shadow:0.3px 0 0 rgba(42,39,48,0.5)">Ref Lev</div>
<div class="a" style="left:369px;top:518.2px;width:84.5px;height:16px;border:1px solid #cbcbcb;background:#fff"></div>
<div class="t" style="left:373px;top:521px;font-size:11px;letter-spacing:0.9px;color:#2a2730;text-shadow:0.3px 0 0 rgba(42,39,48,0.5)">0.00 dBm</div>
<div class="btn" style="left:859px;top:517px;width:53px;height:16px;line-height:14px;font-size:11px;letter-spacing:0.9px;border-color:#8cc2ea">Markers</div>
<div class="btn" style="left:917px;top:517px;width:46px;height:16px;line-height:14px;font-size:11px;letter-spacing:0.9px;border-color:#8cc2ea">Traces</div>
<div class="btn" style="left:967px;top:516.5px;width:24.5px;height:17.5px;border-color:#8cc2ea"></div>
<svg class="a" style="left:969px;top:517px" width="21" height="17" viewBox="-10.5 -8.5 21 17"><g transform="scale(1.15,0.95)"><path fill="#111" stroke="#111" stroke-width="0.6" stroke-linejoin="round" d="M5.64 -1.74 L7.86 -1.51 L7.86 1.51 L5.64 1.74 L5.22 2.75 L6.62 4.49 L4.49 6.62 L2.75 5.22 L1.74 5.64 L1.51 7.86 L-1.51 7.86 L-1.74 5.64 L-2.75 5.22 L-4.49 6.62 L-6.62 4.49 L-5.22 2.75 L-5.64 1.74 L-7.86 1.51 L-7.86 -1.51 L-5.64 -1.74 L-5.22 -2.75 L-6.62 -4.49 L-4.49 -6.62 L-2.75 -5.22 L-1.74 -5.64 L-1.51 -7.86 L1.51 -7.86 L1.74 -5.64 L2.75 -5.22 L4.49 -6.62 L6.62 -4.49 L5.22 -2.75 Z"/><circle r="3.5" fill="#fff"/></g></svg>
<!-- status bar -->
<div class="a" style="left:4px;top:538.5px;width:990px;height:2px;background:#8fc3ec"></div>
<div class="a" style="left:4px;top:540.5px;width:990px;height:16.5px;background:linear-gradient(#fbfbfb,#efefef)"></div>
<div class="a" style="left:4px;top:557px;width:990px;height:2px;background:#8fc3ec"></div>
<div class="a" style="left:91.5px;top:541px;width:1.5px;height:16px;background:#d0d0d0"></div>
<div class="a" style="left:343px;top:541px;width:1.5px;height:16px;background:#d0d0d0"></div>
<div class="a" style="left:402.5px;top:541px;width:1.5px;height:16px;background:#d0d0d0"></div>
<div class="a" style="left:495.5px;top:541px;width:1.5px;height:16px;background:#d0d0d0"></div>
<div class="a" style="left:559px;top:541px;width:1.5px;height:16px;background:#d0d0d0"></div>
<div class="a" style="left:631px;top:541px;width:1.5px;height:16px;background:#d0d0d0"></div>
<div class="a" style="left:702px;top:541px;width:1.5px;height:16px;background:#d0d0d0"></div>
<div class="a" style="left:750px;top:541px;width:1.5px;height:16px;background:#d0d0d0"></div>
<div class="t" style="left:10.5px;top:544px;font-size:9.5px;letter-spacing:0.55px;color:#2c2932;text-shadow:0.3px 0 0 rgba(44,41,50,0.5)">Stopped</div>
<div class="t" style="left:96.5px;top:544px;font-size:9.5px;letter-spacing:0.6px;color:#2c2932;text-shadow:0.3px 0 0 rgba(44,41,50,0.5)">Warm-up period</div>
<div class="t" style="left:348px;top:543.5px;font-size:9.5px;letter-spacing:0.5px;color:#2c2932;text-shadow:0.3px 0 0 rgba(44,41,50,0.5)">Real Time</div>
<div class="t" style="left:408px;top:543.5px;font-size:9.5px;letter-spacing:0.5px;color:#2c2932;text-shadow:0.3px 0 0 rgba(44,41,50,0.5)">Power</div>
<div class="t" style="left:502px;top:543.5px;font-size:9.5px;letter-spacing:0.5px;color:#2c2932;text-shadow:0.3px 0 0 rgba(44,41,50,0.5)">Ref: Int</div>
<div class="t" style="left:565px;top:543.5px;font-size:9.5px;letter-spacing:0.45px;color:#2c2932;text-shadow:0.3px 0 0 rgba(44,41,50,0.5)">Atten: 20 dB</div>
<div class="t" style="left:637px;top:543.5px;font-size:9.5px;letter-spacing:0.45px;color:#2c2932;text-shadow:0.3px 0 0 rgba(44,41,50,0.5)">Preamp: Off</div>
<div class="t" style="left:709px;top:543.5px;font-size:9.5px;letter-spacing:0.5px;color:#2c2932;text-shadow:0.3px 0 0 rgba(44,41,50,0.5)">TG: Off</div>
<svg class="a" style="left:938px;top:540.5px" width="9" height="13"><rect x="3" y="0.5" width="3" height="1.5" fill="#1a4a1a"/><rect x="1" y="2" width="7" height="10.5" rx="1" fill="#2e8a3a" stroke="#173d1a" stroke-width="1"/><rect x="3" y="4.5" width="3" height="3.5" fill="#0a200a"/></svg>
<svg class="a" style="left:970px;top:542px" width="16" height="12"><path d="M1 11 C3 4 9 1 15 1 C13 8 7 11 1 11 Z" fill="#2e9a3a"/><path d="M2 10 L13 2.5" stroke="#a8d8a0" stroke-width="0.8"/></svg>
<!-- right toolbar -->
<div class="a" style="left:762px;top:40px;width:39px;height:14px;border-radius:7px;background:linear-gradient(#6eb4ee,#4a98de)"></div>
<div class="t" style="left:767.5px;top:43.5px;font-size:8.5px;letter-spacing:0.2px;color:#15284a;text-shadow:0.3px 0 0 #15284a">Preset</div>
<div class="a" style="left:815.5px;top:43px;width:8.5px;height:7px;border-radius:50%;background:#4592dc"></div>
<div class="t" style="left:829.5px;top:40px;font-size:12.5px;letter-spacing:0.4px;color:#2a2730;text-shadow:0.3px 0 0 rgba(42,39,48,0.5)">Replay</div>
<svg class="a" style="left:876px;top:44px" width="11" height="6"><path d="M0.5 0.5 H10 L5.2 5.5 Z" fill="#111"/></svg>
<svg class="a" style="left:896px;top:38px" width="18" height="15"><path d="M4 6.5 Q7 2.8 11 3.2 Q15.3 4 15.2 7.5 Q15 11.5 10.5 11.8 Q8 12 6.5 10.2" fill="none" stroke="#35a85a" stroke-width="2.3" stroke-linecap="round"/><path d="M4 8.5 L8.5 9 L5.5 12.5 Z" fill="#259a48"/></svg>
<div class="t" style="left:917px;top:40px;font-size:12.5px;letter-spacing:0.4px;color:#2a2730;text-shadow:0.3px 0 0 rgba(42,39,48,0.5)">Run</div>
<svg class="a" style="left:946.5px;top:44px" width="11" height="6"><path d="M0.5 0.5 H10 L5.2 5.5 Z" fill="#111"/></svg>
<div class="a" style="left:977.5px;top:40px;width:4px;height:4px;border-radius:50%;background:#111"></div>
<div class="a" style="left:977.5px;top:45.5px;width:4px;height:4px;border-radius:50%;background:#111"></div>
<div class="a" style="left:977.5px;top:51px;width:4px;height:4px;border-radius:50%;background:#111"></div>
<!-- left edge shading (skewed screenshot) -->
<div class="a" style="left:2px;top:150px;width:8px;height:363px;background:linear-gradient(90deg,#202428 0%,#6e7884 25%,#a6a6a6 50%,#dcdcdc 78%,rgba(252,252,252,0) 100%);-webkit-mask-image:linear-gradient(#000 0,#000 100%);mask-image:linear-gradient(transparent 0,#000 35%,#000 100%)"></div>
<div class="a" style="left:0;top:513px;width:4.5px;height:49px;background:#000"></div>

</div></body></html>
